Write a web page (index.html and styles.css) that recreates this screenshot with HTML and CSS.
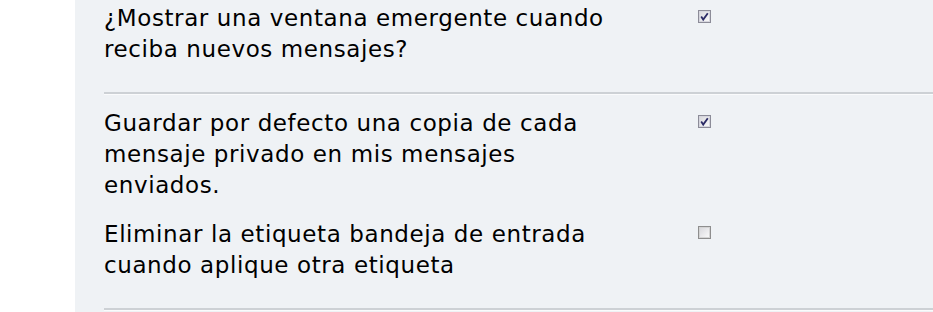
FILE: index.html
```html
<!DOCTYPE html>
<html lang="es">
<head>
    <meta charset="UTF-8">
    <meta name="viewport" content="width=device-width, initial-scale=1.0">
    <title>Opciones de mensajes privados</title>
    <link rel="stylesheet" href="styles.css">
</head>
<body>
    <div class="panel">
        <fieldset class="options">
            <dl>
                <dt><label for="popup_pm">¿Mostrar una ventana emergente cuando reciba nuevos mensajes?</label></dt>
                <dd>
                    <span class="checkbox checked" id="popup_pm">
                        <svg width="13" height="13" viewBox="0 0 13 13">
                            <rect x="0.5" y="0.5" width="12" height="12" fill="#f2f2f6" stroke="#8c8c98"/>
                            <rect x="1.5" y="1.5" width="10" height="10" fill="url(#box)" stroke="#d6d6de"/>
                            <path d="M3.2 6.6 L5.2 9.6 L9.8 3.2" fill="none" stroke="#2b2b66" stroke-width="1.8"/>
                        </svg>
                    </span>
                </dd>
            </dl>
            <hr>
            <dl>
                <dt><label for="save_copy">Guardar por defecto una copia de cada mensaje privado en mis mensajes enviados.</label></dt>
                <dd>
                    <span class="checkbox checked" id="save_copy">
                        <svg width="13" height="13" viewBox="0 0 13 13">
                            <rect x="0.5" y="0.5" width="12" height="12" fill="#f2f2f6" stroke="#8c8c98"/>
                            <rect x="1.5" y="1.5" width="10" height="10" fill="url(#box)" stroke="#d6d6de"/>
                            <path d="M3.2 6.6 L5.2 9.6 L9.8 3.2" fill="none" stroke="#2b2b66" stroke-width="1.8"/>
                        </svg>
                    </span>
                </dd>
            </dl>
            <dl>
                <dt><label for="remove_inbox">Eliminar la etiqueta bandeja de entrada cuando aplique otra etiqueta</label></dt>
                <dd>
                    <span class="checkbox" id="remove_inbox">
                        <svg width="13" height="13" viewBox="0 0 13 13">
                            <defs>
                                <linearGradient id="box" x1="0" y1="0" x2="1" y2="1">
                                    <stop offset="0" stop-color="#d8d8dc"/>
                                    <stop offset="1" stop-color="#fafafa"/>
                                </linearGradient>
                            </defs>
                            <rect x="0.5" y="0.5" width="12" height="12" fill="#f2f2f4" stroke="#8e8e8e"/>
                            <rect x="1.5" y="1.5" width="10" height="10" fill="url(#box)" stroke="#d4d4d4"/>
                        </svg>
                    </span>
                </dd>
            </dl>
            <hr class="last">
        </fieldset>
    </div>
</body>
</html>
```

FILE: styles.css
```css
body {
    margin: 0;
    padding: 0;
    background-color: #ffffff;
    font-family: "DejaVu Sans", Verdana, sans-serif;
    color: #000000;
}
.panel {
    margin-left: 75px;
    height: 312px;
    background-color: #eff2f5;
    padding: 3px 0 0 29px;
    box-sizing: border-box;
    overflow: hidden;
}
.options {
    border: none;
    margin: 0;
    padding: 0;
}
.options dl {
    display: grid;
    grid-template-columns: 594px 1fr;
    margin: 0;
}
.options dt {
    max-width: 510px;
    font-size: 23px;
    line-height: 31px;
    letter-spacing: 0.6px;
}
.options dd {
    margin: 0;
    padding-top: 7px;
}
.options dl + dl {
    margin-top: 18px;
}
.checkbox {
    display: block;
    width: 13px;
    height: 13px;
}
.checkbox svg {
    display: block;
}
hr {
    border: 0;
    border-top: 2px solid #cdd1d5;
    border-bottom: 1px solid #fafbfc;
    height: 0;
    margin: 27px 0 13px 0;
}
hr.last {
    margin-top: 27px;
}
```
